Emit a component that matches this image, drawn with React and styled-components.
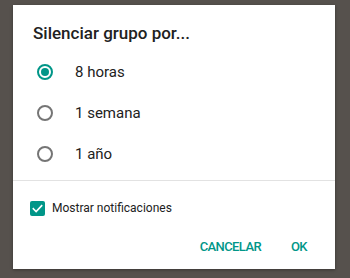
import React, { useState } from 'react';
import styled, { createGlobalStyle } from 'styled-components';

const GlobalStyle = createGlobalStyle`
  html, body {
    margin: 0;
    padding: 0;
    background: #56514d;
    font-family: Roboto, "Noto Sans", sans-serif;
  }
`;

const options = ['8 horas', '1 semana', '1 año'];

const App = () => {
  const [selected, setSelected] = useState(0);
  const [notify, setNotify] = useState(true);

  return (
    <>
      <GlobalStyle />
      <Screen>
        <Dialog>
          <Title>Silenciar grupo por...</Title>
          <OptionList>
            {options.map((label, i) => (
              <Option key={label} onClick={() => setSelected(i)}>
                <Radio checked={selected === i} />
                <OptionLabel>{label}</OptionLabel>
              </Option>
            ))}
          </OptionList>
          <Divider />
          <CheckRow onClick={() => setNotify(!notify)}>
            <Checkbox checked={notify}>
              {notify && (
                <svg width="11" height="11" viewBox="0 0 24 24">
                  <path
                    d="M3 12.5l6 6L21 6"
                    fill="none"
                    stroke="#fff"
                    strokeWidth="3.6"
                    strokeLinecap="square"
                  />
                </svg>
              )}
            </Checkbox>
            <CheckLabel>Mostrar notificaciones</CheckLabel>
          </CheckRow>
          <Actions>
            <ActionButton>CANCELAR</ActionButton>
            <ActionButton>OK</ActionButton>
          </Actions>
        </Dialog>
      </Screen>
    </>
  );
};

export default App;

const Screen = styled.div`
  width: 350px;
  height: 278px;
  padding: 5px 0 0 13px;
  box-sizing: border-box;
  background: #56514d;
`;

const Dialog = styled.div`
  width: 322px;
  height: 264px;
  box-sizing: border-box;
  background: #fff;
  padding: 18px 0 5px;
  box-shadow: 0 1px 3px rgba(0, 0, 0, 0.35);
  display: flex;
  flex-direction: column;
`;

const Title = styled.h2`
  margin: 0;
  padding: 0 20px;
  font-size: 17px;
  line-height: 20px;
  font-weight: 500;
  color: #212121;
`;

const OptionList = styled.div`
  margin: 8px 0 6px;
  display: flex;
  flex-direction: column;
`;

const Option = styled.div`
  height: 41px;
  display: flex;
  align-items: center;
  padding-left: 24px;
  cursor: pointer;
`;

const Radio = styled.span`
  width: 16px;
  height: 16px;
  box-sizing: border-box;
  border-radius: 50%;
  border: 2px solid ${(p) => (p.checked ? '#009688' : '#757575')};
  display: flex;
  align-items: center;
  justify-content: center;
  &::after {
    content: '';
    width: 8px;
    height: 8px;
    border-radius: 50%;
    background: #009688;
    display: ${(p) => (p.checked ? 'block' : 'none')};
  }
`;

const OptionLabel = styled.span`
  margin-left: 22px;
  font-size: 15px;
  color: #212121;
`;

const Divider = styled.div`
  height: 1px;
  background: #e2e2e2;
`;

const CheckRow = styled.div`
  margin-top: 15px;
  height: 24px;
  display: flex;
  align-items: center;
  padding-left: 17px;
  cursor: pointer;
`;

const Checkbox = styled.span`
  width: 15px;
  height: 15px;
  border-radius: 2px;
  box-sizing: border-box;
  background: ${(p) => (p.checked ? '#009688' : 'transparent')};
  border: ${(p) => (p.checked ? 'none' : '2px solid #757575')};
  display: flex;
  align-items: center;
  justify-content: center;
`;

const CheckLabel = styled.span`
  margin-left: 7px;
  font-size: 12px;
  color: #212121;
`;

const Actions = styled.div`
  margin-top: 8px;
  height: 36px;
  display: flex;
  justify-content: flex-end;
  align-items: center;
  gap: 14px;
  padding-right: 20px;
`;

const ActionButton = styled.button`
  border: none;
  background: transparent;
  padding: 0 8px;
  height: 36px;
  font-family: Roboto, "Noto Sans", sans-serif;
  font-size: 13px;
  font-weight: 500;
  letter-spacing: -0.6px;
  color: #009688;
  cursor: pointer;
`;
